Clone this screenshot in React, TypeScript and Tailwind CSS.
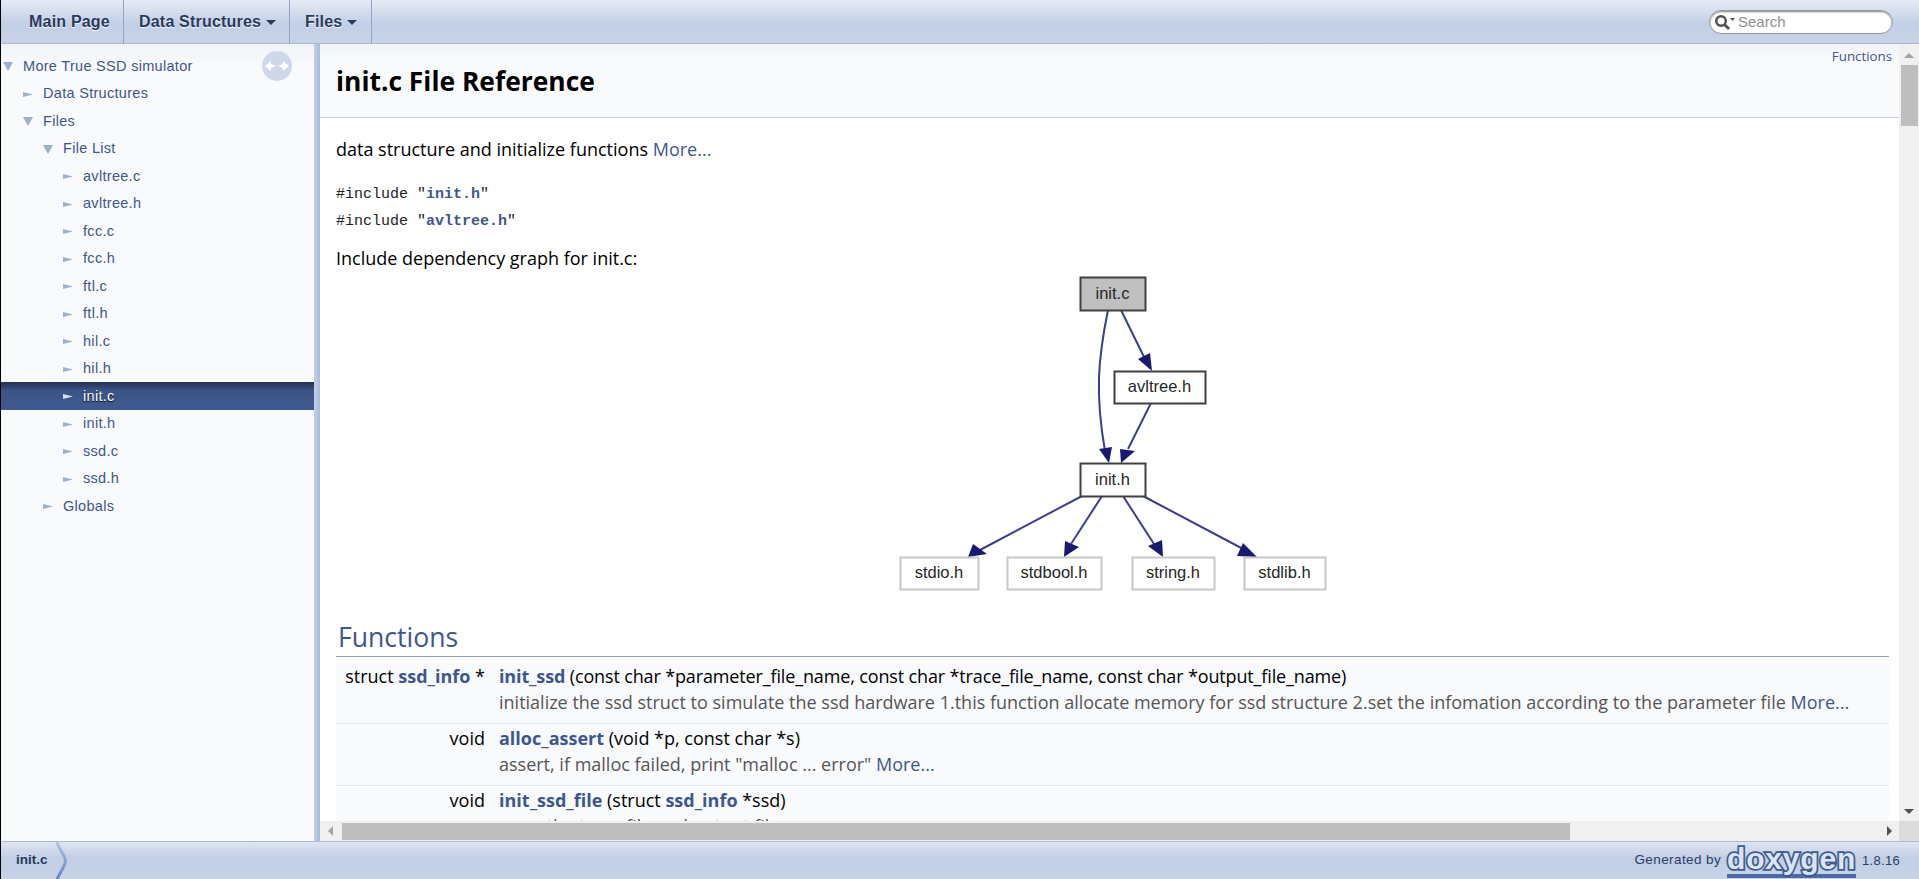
import * as React from 'react';

const sans = 'font-["Liberation_Sans",Arial,sans-serif]';
const body = 'font-["Open_Sans","Noto_Sans",sans-serif]';

const tree: { label: string; level: number; open?: boolean; selected?: boolean }[] = [
  { label: 'More True SSD simulator', level: 0, open: true },
  { label: 'Data Structures', level: 1 },
  { label: 'Files', level: 1, open: true },
  { label: 'File List', level: 2, open: true },
  { label: 'avltree.c', level: 3 },
  { label: 'avltree.h', level: 3 },
  { label: 'fcc.c', level: 3 },
  { label: 'fcc.h', level: 3 },
  { label: 'ftl.c', level: 3 },
  { label: 'ftl.h', level: 3 },
  { label: 'hil.c', level: 3 },
  { label: 'hil.h', level: 3 },
  { label: 'init.c', level: 3, selected: true },
  { label: 'init.h', level: 3 },
  { label: 'ssd.c', level: 3 },
  { label: 'ssd.h', level: 3 },
  { label: 'Globals', level: 2 },
];

function NavTab({ label, caret, className }: { label: string; caret?: boolean; className: string }) {
  return (
    <div className={`flex h-full items-center gap-[5px] border-r border-[#8fa3cc] ${className}`}>
      <span className="text-[16px] font-bold tracking-[0.2px] text-[#283a5d] [text-shadow:0_1px_1px_rgba(255,255,255,0.9)]">
        {label}
      </span>
      {caret && <span className="mt-[1px] h-0 w-0 border-x-[5px] border-t-[5px] border-x-transparent border-t-[#283a5d]" />}
    </div>
  );
}

function TreeRow({ label, level, open, selected }: (typeof tree)[number]) {
  const pad = ['pl-[2px]', 'pl-[22px]', 'pl-[42px]', 'pl-[62px]'][level];
  return (
    <div
      className={`flex h-[27.5px] items-center pt-[2px] ${pad} ${
        selected ? 'bg-gradient-to-b from-[#22304f] via-[#3b5487] via-30% to-[#3f5a90]' : ''
      }`}
    >
      <span className="flex w-[20px] items-center">
        {open ? (
          <svg width="10" height="9" viewBox="0 0 10 9">
            <path d="M0 0h10L5 9z" fill="#9cafd4" />
          </svg>
        ) : (
          <svg width="10" height="5" viewBox="0 0 10 5">
            <path d="M0 0l10 2.5L0 5z" fill={selected ? '#d5def0' : '#9cafd4'} />
          </svg>
        )}
      </span>
      <span
        className={`text-[14.5px] tracking-[0.3px] ${
          selected ? 'text-white [text-shadow:0_1px_1px_#000]' : 'text-[#3d578c]'
        }`}
      >
        {label}
      </span>
    </div>
  );
}

function Node({ x, y, w, h, label, kind }: { x: number; y: number; w: number; h: number; label: string; kind: 'root' | 'node' | 'leaf' }) {
  return (
    <g>
      <rect
        x={x + 0.5}
        y={y + 0.5}
        width={w}
        height={h}
        fill={kind === 'root' ? '#bfbfbf' : '#fff'}
        stroke={kind === 'leaf' ? '#c8c8c8' : '#404040'}
        strokeWidth="2"
      />
      <text
        x={x + w / 2}
        y={y + h / 2 + 5}
        textAnchor="middle"
        fontFamily="'Liberation Sans', Arial, sans-serif"
        fontSize="16.5"
        fill="#262626"
      >
        {label}
      </text>
    </g>
  );
}

function Edge({ d, head }: { d: string; head: string }) {
  return (
    <g>
      <path d={d} fill="none" stroke="#3a3d92" strokeWidth="2" />
      <polygon points={head} fill="#191970" />
    </g>
  );
}

// coordinates are relative to the svg box, which starts at 895,270 on the page
function DependencyGraph() {
  return (
    <svg className="-mt-[1px]" width="435" height="325" viewBox="0 0 435 325">
      <Edge d="M213 41C203 90 200 125 210 182" head="214,194 204,180 217,178" />
      <Edge d="M226 41L250 90" head="257,102 243,90 255,84" />
      <Edge d="M256 134L233 180" head="226,194 225,180 240,182" />
      <Edge d="M187 227L85 281" head="73,288 78,275 92,285" />
      <Edge d="M207 227L176 275" head="169,288 170,272 184,278" />
      <Edge d="M228 227L259 275" head="268,288 253,277 267,271" />
      <Edge d="M248 227L350 281" head="362,288 342,287 348,274" />
      <Node x={185} y={8} w={65} h={33} label="init.c" kind="root" />
      <Node x={219} y={102} w={91} h={32} label="avltree.h" kind="node" />
      <Node x={185} y={194} w={65} h={33} label="init.h" kind="node" />
      <Node x={5} y={288} w={78} h={32} label="stdio.h" kind="leaf" />
      <Node x={112} y={288} w={94} h={32} label="stdbool.h" kind="leaf" />
      <Node x={237} y={288} w={82} h={32} label="string.h" kind="leaf" />
      <Node x={349} y={288} w={81} h={32} label="stdlib.h" kind="leaf" />
    </svg>
  );
}

const A = ({ children, bold }: { children: React.ReactNode; bold?: boolean }) => (
  <span className={`text-[#3d578c] ${bold ? 'font-bold' : ''}`}>{children}</span>
);

function MemberRow({ type, name, desc }: { type: React.ReactNode; name: React.ReactNode; desc: React.ReactNode }) {
  return (
    <div className="flex h-[62px] shrink-0 border-b border-[#dee4f0] bg-[#f9fafc] pt-[1px]">
      <div className="w-[149px] shrink-0 text-right leading-[27px] whitespace-nowrap">{type}</div>
      <div className="pl-[14px]">
        <div className="leading-[27px] whitespace-nowrap">{name}</div>
        <div className="leading-[25px] whitespace-nowrap text-[#555]">{desc}</div>
      </div>
    </div>
  );
}

export default function App() {
  return (
    <div className={`flex h-[879px] w-[1919px] flex-col overflow-hidden border-l border-black bg-white text-black ${sans}`}>
      {/* top menu */}
      <header className="flex h-[44px] shrink-0 items-center bg-gradient-to-b from-[#e6ebf6] via-[#c2cee5] via-55% to-[#c8d3e8] shadow-[inset_0_-1px_0_#aab9d6]">
        <NavTab label="Main Page" className="w-[123px] pl-[28px]" />
        <NavTab label="Data Structures" caret className="w-[166px] pl-[15px]" />
        <NavTab label="Files" caret className="w-[82px] pl-[15px]" />
        <div className="ml-auto mr-[26px] flex h-[24px] w-[184px] items-center rounded-full border border-[#999] bg-white pl-[4px] shadow-[inset_0_1px_2px_rgba(0,0,0,0.5)]">
          <svg width="21" height="17" viewBox="0 0 21 17">
            <circle cx="7" cy="7" r="4.8" fill="none" stroke="#505050" strokeWidth="2.4" />
            <path d="M10.500 10.500l4.500 4.500" stroke="#505050" strokeWidth="2.800" />
            <path d="M16 4h5l-2.500 3z" fill="#505050" />
          </svg>
          <span className="ml-[3px] text-[15px] text-[#909090]">Search</span>
        </div>
      </header>

      <div className="flex min-h-0 flex-1">
        {/* side tree */}
        <nav className="relative w-[313px] shrink-0 bg-gradient-to-b from-[#f0f3f9] from-0% via-[#f9fafc] via-[3%] to-[#f9fafc] pt-[8px]">
          {tree.map((item) => (
            <TreeRow key={item.label} {...item} />
          ))}
          <div className="absolute right-[22px] top-[7px] flex h-[30px] w-[30px] items-center justify-center rounded-full bg-[#cfd8ea]">
            <svg width="24" height="12" viewBox="0 0 24 12">
              <path d="M0 6l6-5v3l5 2-5 2v3zM24 6l-6-5v3l-5 2 5 2v3z" fill="#fff" />
            </svg>
          </div>
        </nav>
        <div className="w-[6px] shrink-0 bg-gradient-to-r from-[#c2cfe8] to-[#a9bbdd]" />

        {/* document */}
        <main className="flex min-w-0 flex-1 flex-col">
          <div className="flex min-h-0 flex-1">
            <div className={`min-w-0 flex-1 overflow-hidden text-[18px] ${body}`}>
              <div className="relative flex h-[74px] items-center border-b border-[#c4cfe5] bg-gradient-to-b from-[#f0f3f9] from-0% via-[#f9fafc] via-20% to-[#f9fafc] pl-[16px] pt-[2px]">
                <h1 className="text-[26.4px] font-bold">init.c File Reference</h1>
                <span className="absolute right-[7px] top-[3px] text-[13.3px] text-[#3d578c]">Functions</span>
              </div>
              <div className="pl-[16px] pr-[10px]">
                <p className="mt-[19px] leading-[24px]">
                  data structure and initialize functions <A>More...</A>
                </p>
                <div className="mt-[20px] font-['Liberation_Mono',monospace] text-[15px] leading-[27px] text-[#222]">
                  <div>
                    #include "<A bold>init.h</A>"
                  </div>
                  <div>
                    #include "<A bold>avltree.h</A>"
                  </div>
                </div>
                <p className="mt-[11px] leading-[24px]">Include dependency graph for init.c:</p>
                <div className="flex justify-center">
                  <DependencyGraph />
                </div>
                <h2 className="ml-[2px] mt-[27px] text-[26.6px] leading-[32px] text-[#3d578c]">Functions</h2>
                <div className="mb-[5px] mt-[3px] border-t border-[#8ba0cc]" />
                <MemberRow
                  type={<>struct <A bold>ssd_info</A> *</>}
                  name={<span className="tracking-[-0.14px]"><A bold>init_ssd</A> (const char *parameter_file_name, const char *trace_file_name, const char *output_file_name)</span>}
                  desc={<>initialize the ssd struct to simulate the ssd hardware 1.this function allocate memory for ssd structure 2.set the infomation according to the parameter file <A>More...</A></>}
                />
                <MemberRow
                  type="void"
                  name={<><A bold>alloc_assert</A> (void *p, const char *s)</>}
                  desc={<>assert, if malloc failed, print "malloc ... error" <A>More...</A></>}
                />
                <MemberRow
                  type="void"
                  name={<><A bold>init_ssd_file</A> (struct <A bold>ssd_info</A> *ssd)</>}
                  desc="open the trace file and output files"
                />
              </div>
            </div>
            {/* vertical scrollbar */}
            <div className="flex w-[20px] shrink-0 flex-col items-center bg-[#f0f0f0]">
              <span className="mt-[9px] h-0 w-0 border-x-[5px] border-b-[5px] border-x-transparent border-b-[#a3a3a3]" />
              <div className="mt-[7px] h-[61px] w-[17px] bg-[#bebebe]" />
              <span className="mb-[7px] mt-auto h-0 w-0 border-x-[5px] border-t-[5px] border-x-transparent border-t-[#505050]" />
            </div>
          </div>
          {/* horizontal scrollbar */}
          <div className="flex h-[20px] shrink-0 items-center bg-[#f0f0f0]">
            <span className="ml-[8px] h-0 w-0 border-y-[5px] border-r-[5px] border-y-transparent border-r-[#a3a3a3]" />
            <div className="ml-[9px] h-[17px] w-[1228px] bg-[#bebebe]" />
            <span className="ml-auto mr-[7px] h-0 w-0 border-y-[5px] border-l-[5px] border-y-transparent border-l-[#505050]" />
            <div className="h-[20px] w-[20px] bg-[#dcdcdc]" />
          </div>
        </main>
      </div>

      {/* status bar */}
      <footer className="flex h-[38px] shrink-0 items-center border-t border-[#aab9d6] bg-gradient-to-b from-[#dfe5f2] via-[#c2cee5] via-45% to-[#c8d3e8]">
        <span className="ml-[15px] text-[13.5px] font-bold text-[#283a5d]">init.c</span>
        <svg className="ml-[7px]" width="13" height="38" viewBox="0 0 13 38">
          <defs>
            <linearGradient id="crumb" x1="0" y1="0" x2="0" y2="1">
              <stop offset="0" stopColor="#b4c3e0" />
              <stop offset="1" stopColor="#5f82c0" />
            </linearGradient>
          </defs>
          <path d="M2 0c1 6 8 13 8.500 19c-0.500 6-7 13-8.500 19" fill="none" stroke="url(#crumb)" strokeWidth="3" />
        </svg>
        <span className="ml-auto text-[13.5px] tracking-[0.4px] text-[#2a3d66]">Generated by</span>
        <span className="mx-[6px] border-b-[4px] border-[#4a6aa5] text-[30px] font-bold leading-[30px] tracking-[0.8px] text-[#dbe4f3] [-webkit-text-stroke:3.5px_#3f5a8e] [paint-order:stroke_fill]">
          doxygen
        </span>
        <span className="mr-[19px] text-[13px] tracking-[0.3px] text-[#2a3d66]">1.8.16</span>
      </footer>
    </div>
  );
}
